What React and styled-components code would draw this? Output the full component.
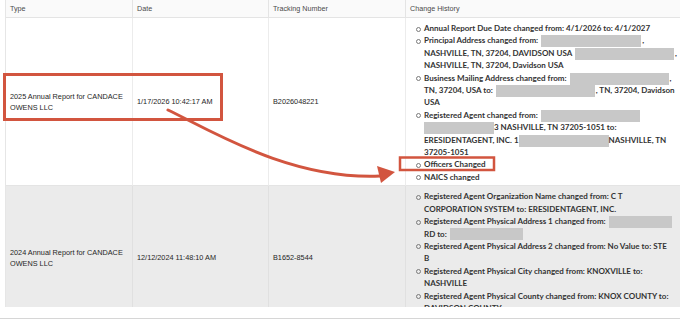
import React from "react";
import styled, { createGlobalStyle } from "styled-components";

const Global = createGlobalStyle`
  html, body { margin: 0; padding: 0; background: #fff; }
  body { width: 680px; height: 319px; overflow: hidden; }
`;

const Page = styled.div`
  position: relative;
  width: 680px;
  height: 319px;
  display: flex;
  flex-direction: column;
  border-bottom: 1px solid #d6d6d6;
  box-sizing: border-box;
  overflow: hidden;
`;

const Viewport = styled.div`
  height: 307px;
  overflow: hidden;
  padding-left: 5px;
`;

const Table = styled.div`
  display: grid;
  grid-template-columns: 127px 136px 137px 290px;
  width: 690px;
  border-left: 1px solid #e6e6e6;
  box-sizing: border-box;
`;

const HeadCell = styled.div`
  height: 18px;
  box-sizing: border-box;
  display: flex;
  align-items: center;
  padding-left: 4px;
  background: #fafafa;
  border-bottom: 1px solid #e4e4e4;
  border-right: 1px solid #e4e4e4;
  font-family: "Liberation Sans", Arial, sans-serif;
  font-size: 7.2px;
  color: #4a4a4a;
`;

const Cell = styled.div`
  display: flex;
  align-items: center;
  box-sizing: border-box;
  padding: 0 4px;
  background: ${(p) => (p.$alt ? "#ebebeb" : "#ffffff")};
  border-right: 1px solid ${(p) => (p.$alt ? "#e0e0e0" : "#ececec")};
  border-bottom: 1px solid #e4e4e4;
  font-family: "Liberation Sans", Arial, sans-serif;
  font-size: 7.3px;
  line-height: 11px;
  color: #262626;
`;

const HistoryCell = styled(Cell)`
  align-items: flex-start;
  padding: 4px 0 2px 10px;
`;

const List = styled.ul`
  list-style: none;
  margin: 0;
  padding: 0;
  font-family: "Lato", "Noto Sans", sans-serif;
  font-weight: 700;
  font-size: 8px;
  line-height: 12.4px;
  color: #333;
  white-space: nowrap;
`;

const Item = styled.li`
  position: relative;
  padding-left: 8px;
  &::before {
    content: "";
    position: absolute;
    left: 0;
    top: 4.5px;
    width: 3px;
    height: 3px;
    border: 0.8px solid #7a7a7a;
    border-radius: 50%;
  }
`;

const Redact = styled.span`
  display: inline-block;
  width: ${(p) => p.$w}px;
  height: 12px;
  background: #c8c8c8;
  vertical-align: middle;
  margin: -4px ${(p) => (p.$tight ? 0 : 1)}px;
`;

const Overlay = styled.svg`
  position: absolute;
  left: 0;
  top: 0;
  pointer-events: none;
`;

const RED = "#d2553f";

function Annotations() {
  return (
    <Overlay width="680" height="319" viewBox="0 0 680 319">
      <rect x="4.5" y="74.5" width="217" height="45" fill="none" stroke={RED} strokeWidth="3" />
      <rect x="400" y="157.5" width="94" height="12.5" fill="none" stroke={RED} strokeWidth="2.5" />
      <path d="M168 110 C 210 130, 290 180, 380 176" fill="none" stroke={RED} strokeWidth="3" strokeLinecap="round" />
      <polygon points="395,172 377,166 381,183" fill={RED} />
    </Overlay>
  );
}

export default function App() {
  return (
    <>
      <Global />
      <Page>
        <Viewport>
          <Table>
            <HeadCell>Type</HeadCell>
            <HeadCell>Date</HeadCell>
            <HeadCell>Tracking Number</HeadCell>
            <HeadCell>Change History</HeadCell>

            <Cell>2025 Annual Report for CANDACE<br />OWENS LLC</Cell>
            <Cell>1/17/2026 10:42:17 AM</Cell>
            <Cell>B2026048221</Cell>
            <HistoryCell>
              <List>
                <Item>Annual Report Due Date changed from: 4/1/2026 to: 4/1/2027</Item>
                <Item>
                  Principal Address changed from: <Redact $w={100} />,<br />
                  NASHVILLE, TN, 37204, DAVIDSON USA <Redact $w={99} />,<br />
                  NASHVILLE, TN, 37204, Davidson USA
                </Item>
                <Item>
                  Business Mailing Address changed from: <Redact $w={99} />,<br />
                  TN, 37204, USA to: <Redact $w={99} />, TN, 37204, Davidson<br />
                  USA
                </Item>
                <Item>
                  Registered Agent changed from: <Redact $w={99} /><br />
                  <Redact $w={70} $tight />3 NASHVILLE, TN 37205-1051 to:<br />
                  ERESIDENTAGENT, INC. 1<Redact $w={90} $tight />NASHVILLE, TN<br />
                  37205-1051
                </Item>
                <Item>Officers Changed</Item>
                <Item>NAICS changed</Item>
              </List>
            </HistoryCell>

            <Cell $alt>2024 Annual Report for CANDACE<br />OWENS LLC</Cell>
            <Cell $alt>12/12/2024 11:48:10 AM</Cell>
            <Cell $alt>B1652-8544</Cell>
            <HistoryCell $alt>
              <List>
                <Item>
                  Registered Agent Organization Name changed from: C T<br />
                  CORPORATION SYSTEM to: ERESIDENTAGENT, INC.
                </Item>
                <Item>
                  Registered Agent Physical Address 1 changed from: <Redact $w={63} /><br />
                  RD to: <Redact $w={73} />
                </Item>
                <Item>
                  Registered Agent Physical Address 2 changed from: No Value to: STE<br />
                  B
                </Item>
                <Item>
                  Registered Agent Physical City changed from: KNOXVILLE to:<br />
                  NASHVILLE
                </Item>
                <Item>
                  Registered Agent Physical County changed from: KNOX COUNTY to:<br />
                  DAVIDSON COUNTY
                </Item>
                <Item>
                  Registered Agent Physical State changed from: TN to: TN
                </Item>
              </List>
            </HistoryCell>
          </Table>
        </Viewport>
        <Annotations />
      </Page>
    </>
  );
}
